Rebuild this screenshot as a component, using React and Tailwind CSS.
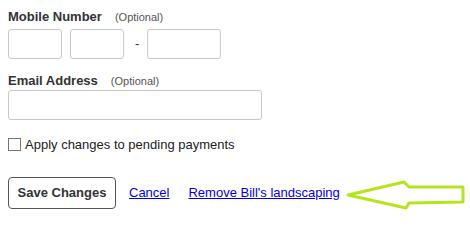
import React from "react";

const font = { fontFamily: '"Liberation Sans", Arial, sans-serif' };

function Label({ children }) {
  return (
    <div className="flex items-baseline leading-[15px]">
      <span className="text-[13px] font-bold text-[#333]">{children}</span>
      <span className="ml-[13px] text-[11px] text-[#555]">(Optional)</span>
    </div>
  );
}

function Box({ className }) {
  return (
    <input
      type="text"
      className={`h-[30px] rounded-[3px] border border-[#c8c8c8] bg-white ${className}`}
    />
  );
}

export default function App() {
  return (
    <div
      className="relative h-[221px] w-[470px] overflow-hidden bg-white pl-[8px] pt-[9px]"
      style={font}
    >
      {/* Mobile number */}
      <Label>Mobile Number</Label>
      <div className="mt-[4px] flex items-center">
        <Box className="w-[54px]" />
        <Box className="ml-[8px] w-[54px]" />
        <span className="ml-[11px] text-[13px] text-[#333]">-</span>
        <Box className="ml-[8px] w-[74px]" />
      </div>

      {/* Email */}
      <div className="mt-[14px]">
        <Label>Email Address</Label>
      </div>
      <Box className="mt-[1px] block w-[254px]" />

      {/* Pending payments */}
      <label className="mt-[17px] flex items-center text-[13px] text-[#222]">
        <span className="block h-[13px] w-[13px] border border-[#777] bg-white" />
        <span className="ml-[4px] leading-[15px]">Apply changes to pending payments</span>
      </label>

      {/* Actions */}
      <div className="mt-[22px] flex items-center">
        <button className="h-[32px] w-[108px] rounded-[4px] border border-[#555] bg-white text-[13px] font-bold text-[#333]">
          Save Changes
        </button>
        <a href="#" className="ml-[13px] text-[13px] text-[#0000ee] underline">
          Cancel
        </a>
        <a href="#" className="ml-[19px] text-[13px] text-[#0000ee] underline">
          Remove Bill's landscaping
        </a>
        <svg width="122" height="34" viewBox="0 0 122 34" className="ml-[6px] mt-[4px] self-start">
          <path
            d="M2 17 L58 4 L63 9 L117 9 L117 24 L63 25 L60 30 Z"
            fill="none"
            stroke="#b5e61d"
            strokeWidth="3"
            strokeLinejoin="round"
          />
        </svg>
      </div>
    </div>
  );
}
